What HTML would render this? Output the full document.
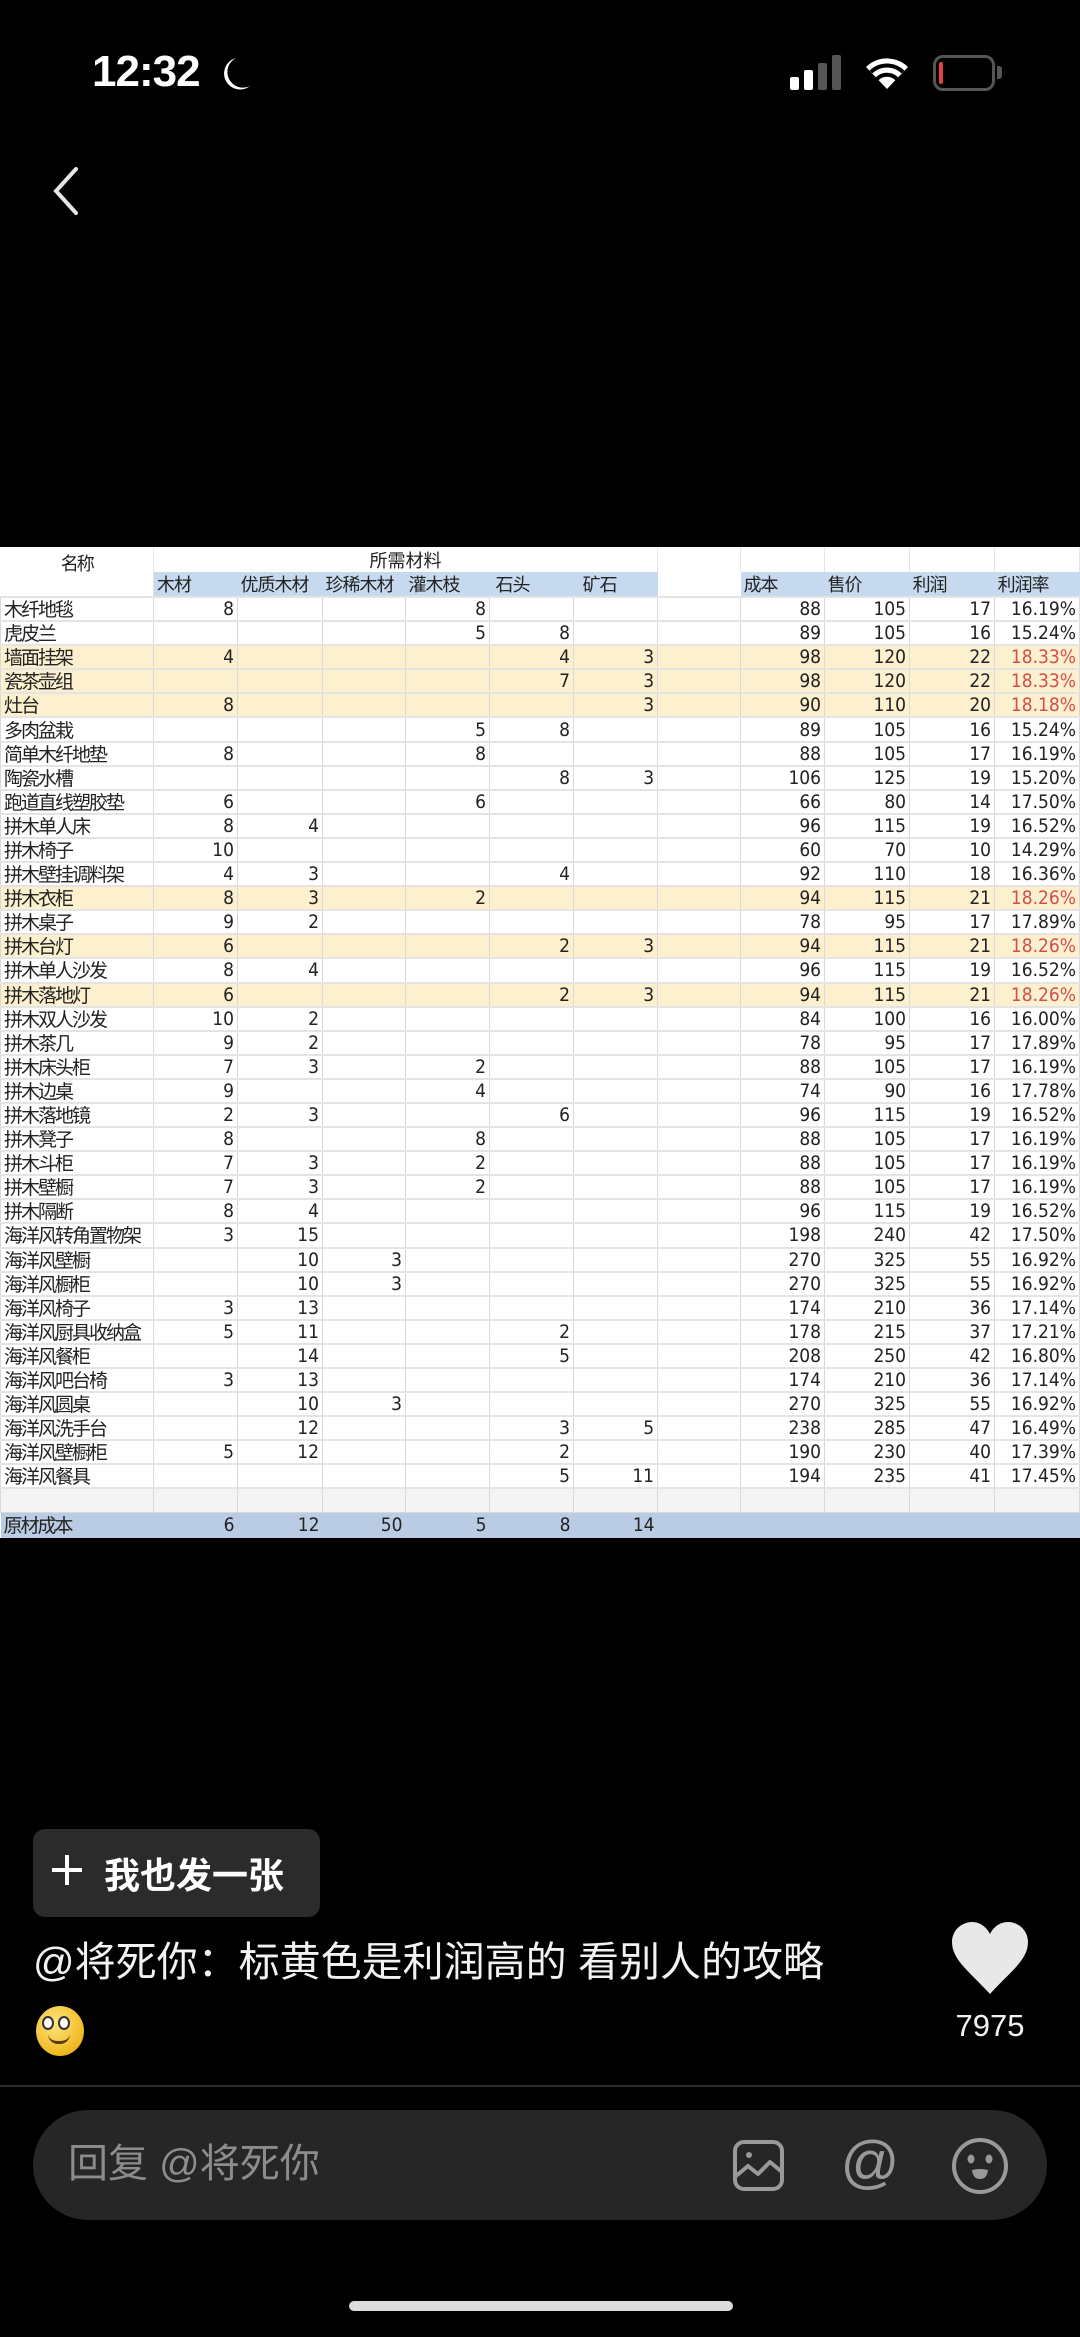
<!DOCTYPE html>
<html><head><meta charset="utf-8"><style>
*{margin:0;padding:0;box-sizing:border-box}
body{width:1080px;height:2337px;background:#000;position:relative;overflow:hidden;font-family:"Liberation Sans","Noto Sans CJK SC",sans-serif;color:#fff}
.abs{position:absolute}
table{position:absolute;left:0;top:547px;width:1080px;border-collapse:collapse;table-layout:fixed;background:#fff;font-family:"DejaVu Sans Condensed","Liberation Sans Narrow","Liberation Sans","Noto Sans CJK SC",sans-serif;font-size:19px;color:#222}
td{border:1px solid #d9d9d9;border-top:2px solid #e4e4e4;height:24.1px;padding:0 3px;text-align:right;white-space:nowrap;overflow:hidden;line-height:20px}
td:first-child{text-align:left;padding-left:3px;font-family:"Noto Sans CJK SC",sans-serif;font-size:19px;letter-spacing:-2px}
tr.y td{background:#fdf0cf}
tr.y td:last-child{color:#d0504a}
tr.h1 td{height:25px;border:none;border-right:1px solid #e4e4e4;text-align:center;font-family:"Noto Sans CJK SC",sans-serif;font-size:18px}
tr.h2 td{height:25px;background:#c6d9ee;text-align:left;font-family:"Noto Sans CJK SC",sans-serif;font-size:18px;border:none;letter-spacing:-1px}
tr.h2 td.w{background:#fff}
tr.f td{background:#b9cce3;height:25px;border:none}
tr.b td{background:#f4f4f4}
</style></head><body>
<div class="abs" style="left:92px;top:47px;font-size:44px;font-weight:bold;letter-spacing:-1px">12:32</div>
<svg class="abs" style="left:222px;top:56px" width="30" height="36" viewBox="0 0 30 36"><path d="M14 2 A16 16 0 1 0 28 30 A14 14 0 0 1 14 2Z" fill="#fff"/></svg>
<svg class="abs" style="left:790px;top:55px" width="56" height="36"><rect x="0" y="22" width="9" height="13" rx="2" fill="#fff"/><rect x="14" y="15" width="9" height="20" rx="2" fill="#fff"/><rect x="28" y="8" width="9" height="27" rx="2" fill="#555"/><rect x="42" y="0" width="9" height="35" rx="2" fill="#555"/></svg>
<svg class="abs" style="left:862px;top:55px" width="50" height="36" viewBox="0 0 50 36"><path d="M25 34 L4 12 A30 30 0 0 1 46 12Z" fill="#fff"/><path d="M9 17 A23 23 0 0 1 41 17" stroke="#000" stroke-width="4" fill="none"/><path d="M15 24 A14 14 0 0 1 35 24" stroke="#000" stroke-width="4" fill="none"/></svg>
<div class="abs" style="left:933px;top:55px;width:62px;height:36px;border:3px solid #555;border-radius:10px"></div>
<div class="abs" style="left:939px;top:62px;width:4px;height:22px;background:#e0443a;border-radius:2px"></div>
<div class="abs" style="left:997px;top:66px;width:5px;height:13px;background:#555;border-radius:0 3px 3px 0"></div>
<svg class="abs" style="left:48px;top:165px" width="34" height="52"><path d="M28 4 L8 26 L28 48" stroke="#e6e6e6" stroke-width="4" fill="none" stroke-linecap="round"/></svg>

<table>
<colgroup><col style="width:153px"><col style="width:84px"><col style="width:85px"><col style="width:83px"><col style="width:84px"><col style="width:84px"><col style="width:84px"><col style="width:83px"><col style="width:84px"><col style="width:85px"><col style="width:85px"><col></colgroup>
<tr class="h1"><td rowspan="2" style="vertical-align:top;padding-top:6px;border-bottom:1px solid #ddd">名称</td><td colspan="6">所需材料</td><td></td><td></td><td></td><td></td><td></td></tr>
<tr class="h2"><td>木材</td><td>优质木材</td><td>珍稀木材</td><td>灌木枝</td><td>&nbsp;石头</td><td>&nbsp;&nbsp;矿石</td><td class="w"></td><td>成本</td><td>售价</td><td>利润</td><td>利润率</td></tr>
<tr><td>木纤地毯</td><td>8</td><td></td><td></td><td>8</td><td></td><td></td><td></td><td>88</td><td>105</td><td>17</td><td>16.19%</td></tr>
<tr><td>虎皮兰</td><td></td><td></td><td></td><td>5</td><td>8</td><td></td><td></td><td>89</td><td>105</td><td>16</td><td>15.24%</td></tr>
<tr class="y"><td>墙面挂架</td><td>4</td><td></td><td></td><td></td><td>4</td><td>3</td><td></td><td>98</td><td>120</td><td>22</td><td>18.33%</td></tr>
<tr class="y"><td>瓷茶壶组</td><td></td><td></td><td></td><td></td><td>7</td><td>3</td><td></td><td>98</td><td>120</td><td>22</td><td>18.33%</td></tr>
<tr class="y"><td>灶台</td><td>8</td><td></td><td></td><td></td><td></td><td>3</td><td></td><td>90</td><td>110</td><td>20</td><td>18.18%</td></tr>
<tr><td>多肉盆栽</td><td></td><td></td><td></td><td>5</td><td>8</td><td></td><td></td><td>89</td><td>105</td><td>16</td><td>15.24%</td></tr>
<tr><td>简单木纤地垫</td><td>8</td><td></td><td></td><td>8</td><td></td><td></td><td></td><td>88</td><td>105</td><td>17</td><td>16.19%</td></tr>
<tr><td>陶瓷水槽</td><td></td><td></td><td></td><td></td><td>8</td><td>3</td><td></td><td>106</td><td>125</td><td>19</td><td>15.20%</td></tr>
<tr><td>跑道直线塑胶垫</td><td>6</td><td></td><td></td><td>6</td><td></td><td></td><td></td><td>66</td><td>80</td><td>14</td><td>17.50%</td></tr>
<tr><td>拼木单人床</td><td>8</td><td>4</td><td></td><td></td><td></td><td></td><td></td><td>96</td><td>115</td><td>19</td><td>16.52%</td></tr>
<tr><td>拼木椅子</td><td>10</td><td></td><td></td><td></td><td></td><td></td><td></td><td>60</td><td>70</td><td>10</td><td>14.29%</td></tr>
<tr><td>拼木壁挂调料架</td><td>4</td><td>3</td><td></td><td></td><td>4</td><td></td><td></td><td>92</td><td>110</td><td>18</td><td>16.36%</td></tr>
<tr class="y"><td>拼木衣柜</td><td>8</td><td>3</td><td></td><td>2</td><td></td><td></td><td></td><td>94</td><td>115</td><td>21</td><td>18.26%</td></tr>
<tr><td>拼木桌子</td><td>9</td><td>2</td><td></td><td></td><td></td><td></td><td></td><td>78</td><td>95</td><td>17</td><td>17.89%</td></tr>
<tr class="y"><td>拼木台灯</td><td>6</td><td></td><td></td><td></td><td>2</td><td>3</td><td></td><td>94</td><td>115</td><td>21</td><td>18.26%</td></tr>
<tr><td>拼木单人沙发</td><td>8</td><td>4</td><td></td><td></td><td></td><td></td><td></td><td>96</td><td>115</td><td>19</td><td>16.52%</td></tr>
<tr class="y"><td>拼木落地灯</td><td>6</td><td></td><td></td><td></td><td>2</td><td>3</td><td></td><td>94</td><td>115</td><td>21</td><td>18.26%</td></tr>
<tr><td>拼木双人沙发</td><td>10</td><td>2</td><td></td><td></td><td></td><td></td><td></td><td>84</td><td>100</td><td>16</td><td>16.00%</td></tr>
<tr><td>拼木茶几</td><td>9</td><td>2</td><td></td><td></td><td></td><td></td><td></td><td>78</td><td>95</td><td>17</td><td>17.89%</td></tr>
<tr><td>拼木床头柜</td><td>7</td><td>3</td><td></td><td>2</td><td></td><td></td><td></td><td>88</td><td>105</td><td>17</td><td>16.19%</td></tr>
<tr><td>拼木边桌</td><td>9</td><td></td><td></td><td>4</td><td></td><td></td><td></td><td>74</td><td>90</td><td>16</td><td>17.78%</td></tr>
<tr><td>拼木落地镜</td><td>2</td><td>3</td><td></td><td></td><td>6</td><td></td><td></td><td>96</td><td>115</td><td>19</td><td>16.52%</td></tr>
<tr><td>拼木凳子</td><td>8</td><td></td><td></td><td>8</td><td></td><td></td><td></td><td>88</td><td>105</td><td>17</td><td>16.19%</td></tr>
<tr><td>拼木斗柜</td><td>7</td><td>3</td><td></td><td>2</td><td></td><td></td><td></td><td>88</td><td>105</td><td>17</td><td>16.19%</td></tr>
<tr><td>拼木壁橱</td><td>7</td><td>3</td><td></td><td>2</td><td></td><td></td><td></td><td>88</td><td>105</td><td>17</td><td>16.19%</td></tr>
<tr><td>拼木隔断</td><td>8</td><td>4</td><td></td><td></td><td></td><td></td><td></td><td>96</td><td>115</td><td>19</td><td>16.52%</td></tr>
<tr><td>海洋风转角置物架</td><td>3</td><td>15</td><td></td><td></td><td></td><td></td><td></td><td>198</td><td>240</td><td>42</td><td>17.50%</td></tr>
<tr><td>海洋风壁橱</td><td></td><td>10</td><td>3</td><td></td><td></td><td></td><td></td><td>270</td><td>325</td><td>55</td><td>16.92%</td></tr>
<tr><td>海洋风橱柜</td><td></td><td>10</td><td>3</td><td></td><td></td><td></td><td></td><td>270</td><td>325</td><td>55</td><td>16.92%</td></tr>
<tr><td>海洋风椅子</td><td>3</td><td>13</td><td></td><td></td><td></td><td></td><td></td><td>174</td><td>210</td><td>36</td><td>17.14%</td></tr>
<tr><td>海洋风厨具收纳盒</td><td>5</td><td>11</td><td></td><td></td><td>2</td><td></td><td></td><td>178</td><td>215</td><td>37</td><td>17.21%</td></tr>
<tr><td>海洋风餐柜</td><td></td><td>14</td><td></td><td></td><td>5</td><td></td><td></td><td>208</td><td>250</td><td>42</td><td>16.80%</td></tr>
<tr><td>海洋风吧台椅</td><td>3</td><td>13</td><td></td><td></td><td></td><td></td><td></td><td>174</td><td>210</td><td>36</td><td>17.14%</td></tr>
<tr><td>海洋风圆桌</td><td></td><td>10</td><td>3</td><td></td><td></td><td></td><td></td><td>270</td><td>325</td><td>55</td><td>16.92%</td></tr>
<tr><td>海洋风洗手台</td><td></td><td>12</td><td></td><td></td><td>3</td><td>5</td><td></td><td>238</td><td>285</td><td>47</td><td>16.49%</td></tr>
<tr><td>海洋风壁橱柜</td><td>5</td><td>12</td><td></td><td></td><td>2</td><td></td><td></td><td>190</td><td>230</td><td>40</td><td>17.39%</td></tr>
<tr><td>海洋风餐具</td><td></td><td></td><td></td><td></td><td>5</td><td>11</td><td></td><td>194</td><td>235</td><td>41</td><td>17.45%</td></tr>
<tr class="b"><td></td><td></td><td></td><td></td><td></td><td></td><td></td><td></td><td></td><td></td><td></td><td></td></tr>
<tr class="f"><td>原材成本</td><td>6</td><td>12</td><td>50</td><td>5</td><td>8</td><td>14</td><td></td><td></td><td></td><td></td><td></td></tr>
</table>

<div class="abs" style="left:33px;top:1829px;width:287px;height:88px;background:#2b2b2b;border-radius:12px"></div>
<div class="abs" style="left:52px;top:1868px;width:30px;height:4px;background:#fff"></div>
<div class="abs" style="left:65px;top:1855px;width:4px;height:30px;background:#fff"></div>
<div class="abs" style="left:104px;top:1848px;font-size:36px;font-weight:bold;font-family:'Noto Sans CJK SC',sans-serif;line-height:50px">我也发一张</div>
<div class="abs" style="left:33px;top:1934px;font-size:41px;line-height:56px;color:#f2f2f2;font-family:'Liberation Sans','Noto Sans CJK SC',sans-serif;white-space:nowrap">@将死你：标黄色是利润高的 看别人的攻略</div>
<div class="abs" style="left:36px;top:2006px;width:48px;height:50px;border-radius:50%;background:radial-gradient(circle at 40% 35%,#ffe680,#f0b820 70%,#d89010)"></div>
<div class="abs" style="left:42px;top:2016px;width:12px;height:14px;border-radius:50%;background:#fff;border:2px solid #333"></div>
<div class="abs" style="left:58px;top:2016px;width:12px;height:14px;border-radius:50%;background:#fff;border:2px solid #333"></div>
<div class="abs" style="left:48px;top:2034px;width:22px;height:10px;border-bottom:3px solid #5a3a10;border-radius:0 0 12px 12px"></div>
<svg class="abs" style="left:950px;top:1920px" width="80" height="76" viewBox="0 0 80 76"><path d="M40 74 C20 52 2 40 2 22 C2 10 12 2 22 2 C31 2 37 8 40 14 C43 8 49 2 58 2 C68 2 78 10 78 22 C78 40 60 52 40 74Z" fill="#e8e8e8"/></svg>
<div class="abs" style="left:940px;top:2008px;width:100px;text-align:center;font-size:31px;color:#f2f2f2">7975</div>
<div class="abs" style="left:0;top:2085px;width:1080px;height:2px;background:#2e2e2e"></div>
<div class="abs" style="left:33px;top:2110px;width:1014px;height:110px;background:#262626;border-radius:55px"></div>
<div class="abs" style="left:68px;top:2136px;font-size:40px;line-height:56px;color:#8c8c8c;font-family:'Liberation Sans','Noto Sans CJK SC',sans-serif">回复 @将死你</div>
<svg class="abs" style="left:732px;top:2138px" width="54" height="54" viewBox="0 0 54 54" fill="none" stroke="#999" stroke-width="4"><rect x="3" y="4" width="47" height="47" rx="9"/><circle cx="17" cy="17" r="3" fill="#999" stroke="none"/><path d="M4 38 L16 28 L26 36 L38 24 L50 34" stroke-linejoin="round"/></svg>
<div class="abs" style="left:838px;top:2128px;width:64px;text-align:center;font-size:58px;line-height:70px;color:#999">@</div>
<svg class="abs" style="left:950px;top:2136px" width="60" height="60" viewBox="0 0 60 60"><circle cx="30" cy="30" r="26" fill="none" stroke="#999" stroke-width="4"/><ellipse cx="21" cy="23" rx="3.5" ry="4.5" fill="#999"/><ellipse cx="39" cy="23" rx="3.5" ry="4.5" fill="#999"/><path d="M22 34 Q30 32 38 34 Q37 43 30 43 Q23 43 22 34Z" fill="#999"/></svg>
<div class="abs" style="left:349px;top:2301px;width:384px;height:10px;background:#dcdcdc;border-radius:5px"></div>
</body></html>
